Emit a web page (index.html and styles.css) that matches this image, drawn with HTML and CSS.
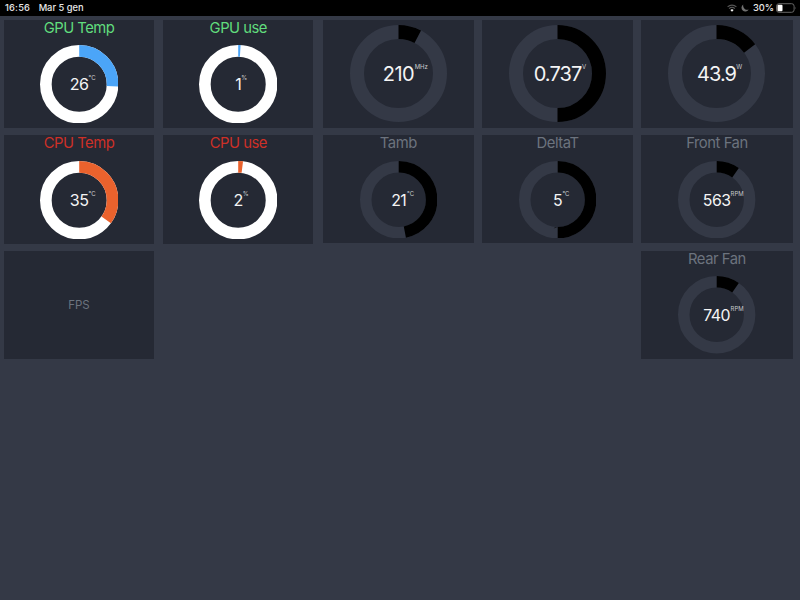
FILE: index.html
```html
<!DOCTYPE html>
<html lang="it">
<head>
<title>PC Monitor</title>
<meta charset="UTF-8">
<meta name="viewport" content="width=device-width, initial-scale=1.0">
<link rel="stylesheet" href="styles.css">
</head>
<body>
<header class="status">
    <span class="time">16:56</span>
    <span class="date">Mar 5 gen</span>
    <svg class="wifi" width="10" height="8" viewBox="0 0 10 8">
        <path class="off" d="M0.6 2.9A6.3 6.3 0 0 1 9.4 2.9"/>
        <path class="off" d="M2.1 4.6A4.1 4.1 0 0 1 7.9 4.6"/>
        <path class="on" d="M3.4 6A2.4 2.4 0 0 1 6.6 6L5 7.7Z"/>
    </svg>
    <svg class="moon" width="8" height="8" viewBox="0 0 8 8">
        <path d="M2.3 0.4A4.3 4.3 0 0 0 7.8 5.6A3.9 3.9 0 1 1 2.3 0.4Z"/>
    </svg>
    <span class="percent">30%</span>
    <svg class="battery" width="21" height="10" viewBox="0 0 21 10">
        <rect class="case" x="0.5" y="0.7" width="17.6" height="8.6" rx="2.4"/>
        <rect class="level" x="1.5" y="1.7" width="5" height="6.6" rx="1"/>
        <path class="tip" d="M19 3.7Q20.2 5 19 6.3Z"/>
    </svg>
</header>
<main class="board">
    <section class="tile narrow">
        <h2 class="green">GPU Temp</h2>
        <svg class="gauge white" viewBox="-39 -39 78 78">
            <circle class="track" r="33.2"/>
            <circle class="bar blue" r="33.2" pathLength="100" stroke-dasharray="26 100"/>
            <text class="value" y="6">26</text>
            <text class="unit" x="9.3" y="-4">°C</text>
        </svg>
    </section>
    <section class="tile narrow">
        <h2 class="green">GPU use</h2>
        <svg class="gauge white" viewBox="-39 -39 78 78">
            <circle class="track" r="33.2"/>
            <circle class="bar blue" r="33.2" pathLength="100" stroke-dasharray="1 100"/>
            <text class="value" y="6">1</text>
            <text class="unit" x="3" y="-4">%</text>
        </svg>
    </section>
    <section class="tile">
        <svg class="gauge big" viewBox="-48.5 -48.5 97 97">
            <circle class="track" r="41.5"/>
            <circle class="bar" r="41.5" pathLength="100" stroke-dasharray="7.7 100"/>
            <text class="value" y="7">210</text>
            <text class="unit" x="16.2" y="-5">MHz</text>
        </svg>
    </section>
    <section class="tile">
        <svg class="gauge big" viewBox="-48.5 -48.5 97 97">
            <circle class="track" r="41.5"/>
            <circle class="bar" r="41.5" pathLength="100" stroke-dasharray="50 100"/>
            <text class="value long" y="7">0.737</text>
            <text class="unit" x="24.6" y="-5">V</text>
        </svg>
    </section>
    <section class="tile">
        <svg class="gauge big" viewBox="-48.5 -48.5 97 97">
            <circle class="track" r="41.5"/>
            <circle class="bar" r="41.5" pathLength="100" stroke-dasharray="14.7 100"/>
            <text class="value long" y="7">43.9</text>
            <text class="unit" x="19.8" y="-5">W</text>
        </svg>
    </section>

    <section class="tile narrow">
        <h2 class="red">CPU Temp</h2>
        <svg class="gauge white" viewBox="-39 -39 78 78">
            <circle class="track" r="33.2"/>
            <circle class="bar orange" r="33.2" pathLength="100" stroke-dasharray="35 100"/>
            <text class="value" y="6">35</text>
            <text class="unit" x="9.3" y="-4">°C</text>
        </svg>
    </section>
    <section class="tile narrow">
        <h2 class="red">CPU use</h2>
        <svg class="gauge white" viewBox="-39 -39 78 78">
            <circle class="track" r="33.2"/>
            <circle class="bar orange" r="33.2" pathLength="100" stroke-dasharray="2 100"/>
            <text class="value" y="6">2</text>
            <text class="unit" x="4.5" y="-4">%</text>
        </svg>
    </section>
    <section class="tile">
        <h2>Tamb</h2>
        <svg class="gauge" viewBox="-39 -39 78 78">
            <circle class="track" r="33.2"/>
            <circle class="bar" r="33.2" pathLength="100" stroke-dasharray="47 100"/>
            <text class="value" y="6">21</text>
            <text class="unit" x="8.5" y="-4">°C</text>
        </svg>
    </section>
    <section class="tile">
        <h2>DeltaT</h2>
        <svg class="gauge" viewBox="-39 -39 78 78">
            <circle class="track" r="33.2"/>
            <circle class="bar" r="33.2" pathLength="100" stroke-dasharray="50 100"/>
            <text class="value" y="6">5</text>
            <text class="unit" x="4.8" y="-4">°C</text>
        </svg>
    </section>
    <section class="tile">
        <h2>Front Fan</h2>
        <svg class="gauge" viewBox="-39 -39 78 78">
            <circle class="track" r="33.2"/>
            <circle class="bar" r="33.2" pathLength="100" stroke-dasharray="9.7 100"/>
            <text class="value" y="6">563</text>
            <text class="unit" x="14" y="-4">RPM</text>
        </svg>
    </section>

    <section class="tile narrow fps">FPS</section>
    <section class="tile last">
        <h2>Rear Fan</h2>
        <svg class="gauge" viewBox="-39 -39 78 78">
            <circle class="track" r="33.2"/>
            <circle class="bar" r="33.2" pathLength="100" stroke-dasharray="9.7 100"/>
            <text class="value" y="6">740</text>
            <text class="unit" x="14" y="-4">RPM</text>
        </svg>
    </section>
</main>
</body>
</html>
```
FILE: styles.css
```css
body {
    margin: 0;
    height: 600px;
    overflow: hidden;
    font-family: Inter, "Liberation Sans", sans-serif;
    background-color: #343946;
    color: #fff;
}

.status {
    display: flex;
    align-items: center;
    box-sizing: border-box;
    height: 15.5px;
    padding: 0 3px 0 5px;
    background-color: #000;
    font-size: 9.3px;
    font-weight: 500;
    color: #e8e8e8;
}

.time { letter-spacing: 0.2px; }
.date { margin-left: 8.5px; }
.wifi { margin-left: auto; }
.moon { margin-left: 4px; }
.percent { margin-left: 4px; }
.battery { margin-left: 2px; }

.wifi path { fill: none; stroke-width: 1.1; }
.wifi .off { stroke: #555; }
.wifi .on { fill: #fff; }
.moon path { fill: #707070; }
.case { fill: none; stroke: #666; }
.level { fill: #fff; }
.tip { fill: #666; }

.board {
    display: grid;
    grid-template-columns: repeat(5, 151.5px);
    grid-auto-rows: 108px;
    gap: 7.6px 7.8px;
    padding: 4px 0 0 4px;
}

.tile {
    display: flex;
    flex-direction: column;
    align-items: center;
    background-color: #252934;
}

.narrow { width: 150px; height: 108.6px; }
.last { grid-column: 5; }

h2 {
    margin: 0;
    height: 25.5px;
    line-height: 17px;
    font-size: 14.8px;
    font-weight: 400;
    letter-spacing: -0.45px;
    color: #6c737e;
}

.green { color: #61dd7d; }
.red { color: #ce3027; }

h2.green, h2.red { letter-spacing: -0.5px; }

.gauge {
    width: 77.4px;
    height: 77.4px;
}

.gauge.white { width: 78.4px; height: 78.4px; }
.gauge.big { width: 97px; height: 97px; margin-top: 5.5px; }

.track, .bar {
    fill: none;
    stroke: #343946;
    stroke-width: 11.6;
}

.white .track { stroke: #fff; }
.big circle { stroke-width: 14; }
.bar { stroke: #000; transform: rotate(-90deg); }
.bar.blue { stroke: #4ba5f8; }
.bar.orange { stroke: #ea622d; }

.value {
    fill: #f4f4f4;
    font-size: 16px;
    letter-spacing: -0.5px;
    text-anchor: middle;
}

.big .value { font-size: 20px; }
.big .long { letter-spacing: -0.9px; }
.unit { fill: #c8c9cc; font-size: 6px; }

.fps {
    justify-content: center;
    font-size: 11.5px;
    color: #6c737e;
}
```
